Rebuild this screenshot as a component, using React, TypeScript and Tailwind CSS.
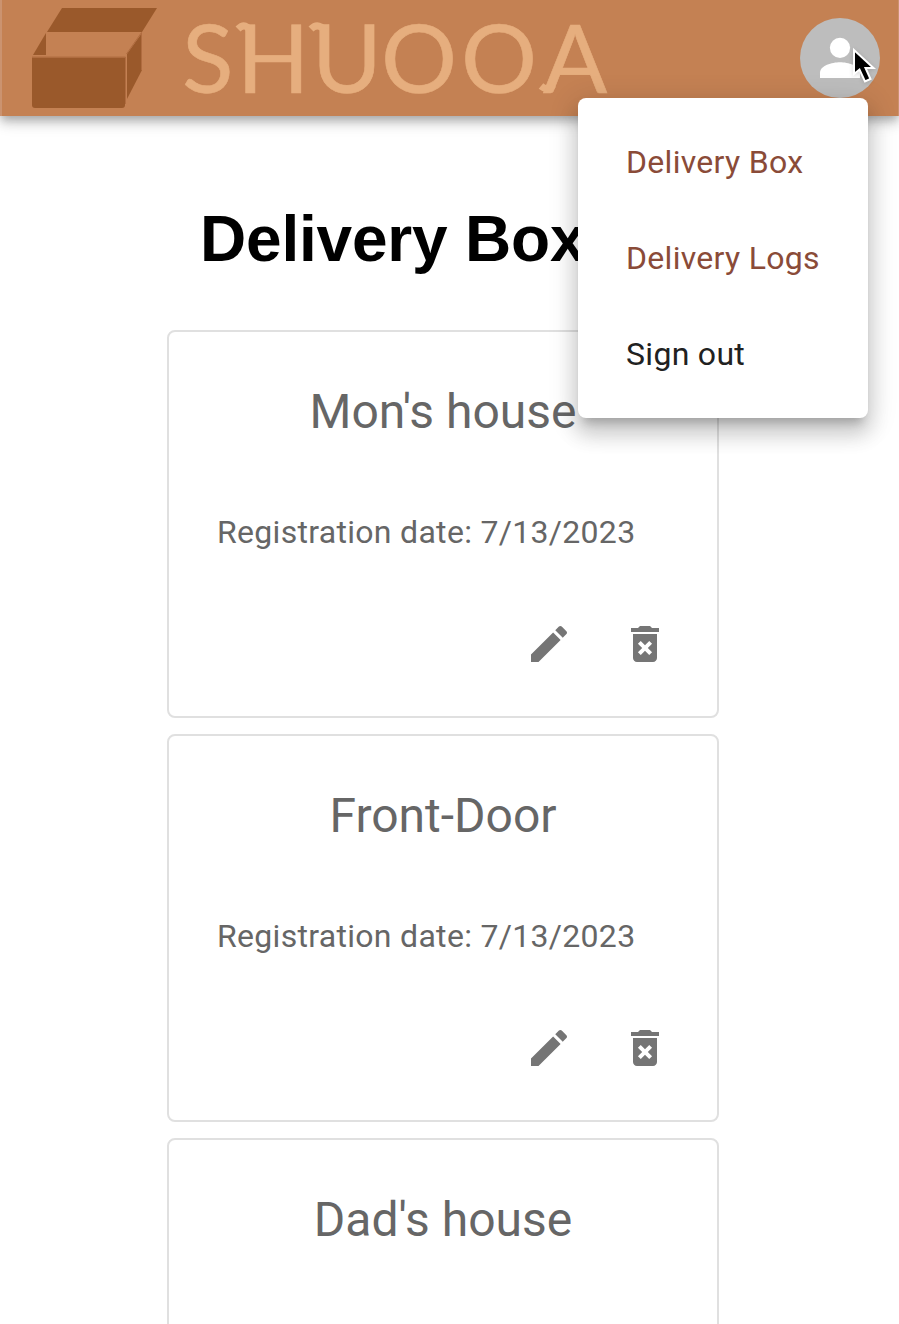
import React from "react";

const boxes = [
  { name: "Mon's house", date: "7/13/2023" },
  { name: "Front-Door", date: "7/13/2023" },
  { name: "Dad's house", date: "7/13/2023" },
];

function Logo() {
  return (
    <svg width="620" height="116" viewBox="0 0 620 116" className="block overflow-visible">
      <g fill="#9a592b">
        <path d="M62 8H157L142 32H47Z" />
        <path d="M46 33V55H33Z" />
        <path d="M32 57.500H125V105Q125 108 122 108H35Q32 108 32 105Z" />
        <path d="M142 33V70L127 99V54Z" />
      </g>
      <path d="M32 57H125.500V104M126.500 54L141.500 32.500V70" fill="none" stroke="#b06c40" strokeWidth="1" />
      <text
        x="182 237 312 381 461 543"
        y="92.500"
        fill="#e6ae7e"
        stroke="#e6ae7e"
        strokeWidth="0.600"
        className="font-['Lato',sans-serif] text-[95px]"
      >
        SHUOOA
      </text>
      <g fill="none" stroke="#e6ae7e" strokeWidth="7">
        <path d="M238 29Q243 24 247 27Q250 29 250 36" />
        <path d="M311 29Q316 24 321 27Q325 29 325 36" />
        <path d="M541 86Q548 92 553 85" />
      </g>
    </svg>
  );
}

function BoxCard({ name, date }: { name: string; date: string }) {
  return (
    <article className="flex h-[388px] w-[552px] shrink-0 flex-col rounded-lg border-2 border-[#e0e0e0] px-12 text-[#666666]">
      <h2 className="mt-12 text-center text-[48px] leading-[64px]">{name}</h2>
      <p className="mt-16 text-[32px] leading-[48px] tracking-[0.3px]">Registration date: {date}</p>
      <div className="mt-16 flex justify-end gap-12 text-[#757575]">
        <button aria-label="Edit" className="h-12 w-12">
          <svg viewBox="0 0 24 24" fill="currentColor" className="h-12 w-12">
            <path d="M3 17.250V21h3.750L17.810 9.940l-3.750-3.750L3 17.250zM20.710 7.040c.39-.39.39-1.020 0-1.410l-2.340-2.340c-.39-.39-1.020-.39-1.410 0l-1.830 1.830 3.750 3.750 1.830-1.830z" />
          </svg>
        </button>
        <button aria-label="Delete" className="h-12 w-12">
          <svg viewBox="0 0 24 24" fill="currentColor" className="h-12 w-12">
            <path d="M6 19c0 1.100.9 2 2 2h8c1.100 0 2-.9 2-2V7H6v12zm2.460-7.120 1.410-1.410L12 12.590l2.120-2.120 1.410 1.410L13.410 14l2.120 2.120-1.410 1.410L12 15.410l-2.120 2.120-1.410-1.410L10.590 14l-2.130-2.120zM15.500 4l-1-1h-5l-1 1H5v2h14V4z" />
          </svg>
        </button>
      </div>
    </article>
  );
}

function AccountMenu() {
  return (
    <nav className="absolute left-[578px] top-[98px] z-20 flex h-80 w-[290px] flex-col rounded-lg bg-white py-4 text-[32px] leading-[48px] tracking-[0.3px] text-[#8a4b38] shadow-[0_10px_10px_-6px_rgba(0,0,0,0.2),0_16px_20px_2px_rgba(0,0,0,0.14),0_6px_28px_4px_rgba(0,0,0,0.12)]">
      <a className="px-12 py-6">Delivery Box</a>
      <a className="px-12 py-6">Delivery Logs</a>
      <a className="px-12 py-6 text-[#212121]">Sign out</a>
    </nav>
  );
}

export default function App() {
  return (
    <div className="relative h-[1324px] w-[899px] overflow-hidden bg-white font-['Roboto',sans-serif]">
      <header className="relative flex h-[116px] justify-between border-l-2 border-r border-[#cb9370] bg-[#c48153] shadow-[0_4px_8px_-2px_rgba(0,0,0,0.2),0_8px_10px_rgba(0,0,0,0.14),0_2px_20px_rgba(0,0,0,0.12)]">
        <div className="-ml-0.5">
          <Logo />
        </div>
        <button aria-label="Account" className="mr-[18px] mt-[18px] h-20 w-20 rounded-full bg-[#bdbdbd] p-2">
          <svg viewBox="0 0 24 24" fill="white" className="h-16 w-16">
            <circle cx="12" cy="8.200" r="3.800" />
            <path d="M4.500 19.500V17.500c0-2.600 4.500-3.900 7.500-3.900s7.500 1.300 7.500 3.900v2z" />
          </svg>
        </button>
      </header>
      <main className="flex flex-col">
        <h1 className="ml-[200px] mt-[86px] font-['Liberation_Sans',sans-serif] text-[64px] font-bold leading-[74px] tracking-[-0.2px]">Delivery Box</h1>
        <section className="ml-[167px] mt-[54px] flex flex-col gap-4">
          {boxes.map((box) => (
            <BoxCard key={box.name} {...box} />
          ))}
        </section>
      </main>
      <AccountMenu />
      <svg className="absolute left-[850px] top-[46px] z-30 drop-shadow-sm" width="32" height="42" viewBox="0 0 32 42">
        <path d="M4 4V28L9.500 23.500L15 35.500L20.500 33L15.500 22H23.500Z" fill="black" stroke="white" strokeWidth="2" />
      </svg>
    </div>
  );
}
